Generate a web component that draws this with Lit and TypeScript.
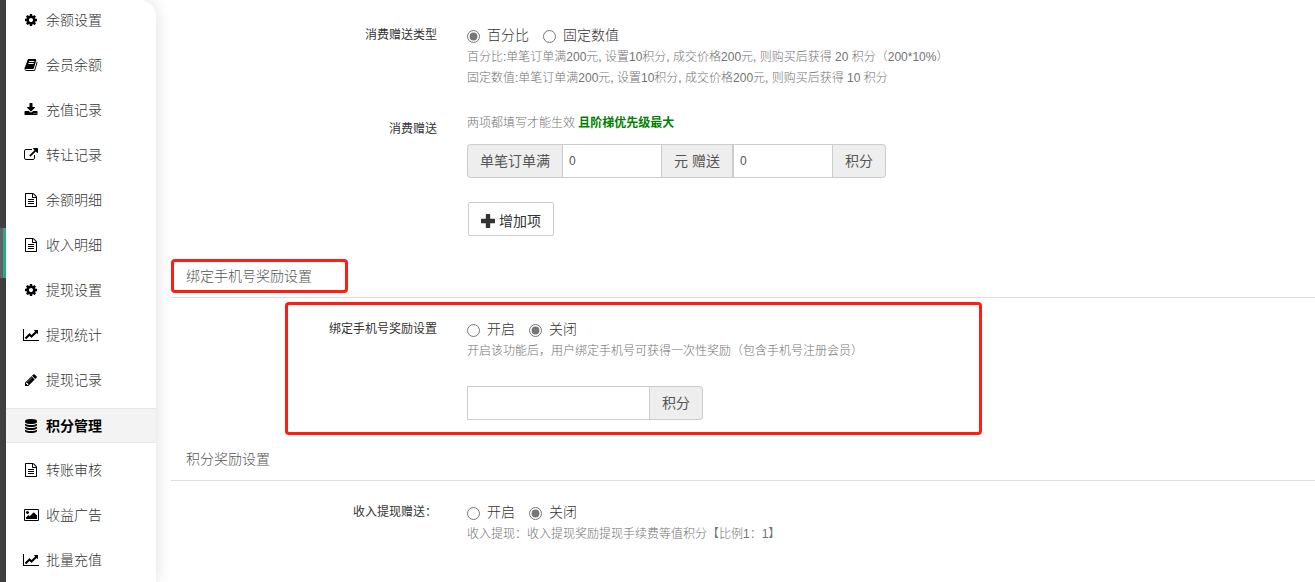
import { LitElement, html, css, svg } from "lit";
import { customElement, property, state } from "lit/decorators.js";
import { classMap } from "lit/directives/class-map.js";

type Icon = { box: string; width: number; path: string };

const doc: Icon = {
  box: "0 0 1792 1792",
  width: 14,
  path: "M1596 380q28 28 48 76t20 88v1152q0 40-28 68t-68 28h-1344q-40 0-68-28t-28-68v-1600q0-40 28-68t68-28h896q40 0 88 20t76 48zm-444-244v376h376q-10-29-22-41l-313-313q-12-12-41-22zm384 1528v-1024h-416q-40 0-68-28t-28-68v-416h-768v1536h1280zm-1024-864q0-14 9-23t23-9h704q14 0 23 9t9 23v64q0 14-9 23t-23 9h-704q-14 0-23-9t-9-23v-64zm736 224q14 0 23 9t9 23v64q0 14-9 23t-23 9h-704q-14 0-23-9t-9-23v-64q0-14 9-23t23-9h704zm0 256q14 0 23 9t9 23v64q0 14-9 23t-23 9h-704q-14 0-23-9t-9-23v-64q0-14 9-23t23-9h704z",
};
const cog: Icon = {
  box: "0 0 1792 1792",
  width: 14,
  path: "M1152 896q0-106-75-181t-181-75-181 75-75 181 75 181 181 75 181-75 75-181zm512-109v222q0 12-8 23t-20 13l-185 28q-19 54-39 91 35 50 107 138 10 12 10 25t-9 23q-27 37-99 108t-94 71q-12 0-26-9l-138-108q-44 23-91 38-16 136-29 186-7 28-36 28h-222q-14 0-24.5-8.5t-11.5-21.5l-28-184q-49-16-90-37l-141 107q-10 9-25 9-14 0-25-11-126-114-165-168-7-10-7-23 0-12 8-23 15-21 51-66.5t54-70.5q-27-50-41-99l-183-27q-13-2-21-12.5t-8-23.5v-222q0-12 8-23t19-13l186-28q14-46 39-92-40-57-107-138-10-12-10-24 0-10 9-23 26-36 98.5-107.5t94.5-71.5q13 0 26 10l138 107q44-23 91-38 16-136 29-186 7-28 36-28h222q14 0 24.5 8.5t11.5 21.5l28 184q49 16 90 37l142-107q9-9 24-9 13 0 25 10 129 119 165 170 7 8 7 22 0 12-8 23-15 21-51 66.5t-54 70.5q26 50 41 98l183 28q13 2 21 12.5t8 23.5z",
};
const chart: Icon = {
  box: "0 0 2048 1792",
  width: 16,
  path: "M2048 1536v128h-2048v-1536h128v1408h1920zm-128-1248v435q0 21-19.5 29.5t-35.5-7.5l-121-121-633 633q-10 10-23 10t-23-10l-233-233-416 416-192-192 585-585q10-10 23-10t23 10l233 233 464-464-121-121q-16-16-7.5-35.5t29.5-19.5h435q14 0 23 9t9 23z",
};
const book: Icon = {
  box: "0 0 1792 1792",
  width: 14,
  path: "M1703 478q40 57 18 129l-275 906q-19 64-76.5 107.5t-122.5 43.5h-923q-77 0-148.5-53.5t-99.5-131.5q-24-67-2-127 0-4 3-27t4-37q1-8-3-21.5t-3-19.5q2-11 8-21t16.5-23.5 16.5-23.5q23-38 45-91.5t30-91.5q3-10 .5-30t-.5-28q3-11 17-28t17-23q21-36 42-92t25-90q1-9-2.5-32t.5-28q4-13 22-30.5t22-22.5q19-26 42.5-84.5t27.5-96.5q1-8-3-25.5t-2-26.5q2-8 9-18t18-23 17-21q8-12 16.5-30.5t15-35 16-36 19.5-32 26.5-23.5 36-11.5 47.5 5.5l-1 3q38-9 51-9h761q74 0 114 56t18 130l-274 906q-36 119-71.5 153.5t-128.5 34.5h-869q-27 0-38 15-11 16-1 43 24 70 144 70h923q29 0 56-15.5t35-41.5l300-987q7-22 5-57 38 15 59 43zm-1064 2q-4 13 2 22.5t20 9.5h608q13 0 25.5-9.5t16.5-22.5l21-64q4-13-2-22.5t-20-9.5h-608q-13 0-25.5 9.5t-16.5 22.5zm-83 256q-4 13 2 22.5t20 9.5h608q13 0 25.5-9.5t16.5-22.5l21-64q4-13-2-22.5t-20-9.5h-608q-13 0-25.5 9.5t-16.5 22.5z",
};
const download: Icon = {
  box: "0 0 1792 1792",
  width: 14,
  path: "M1344 1344q0-26-19-45t-45-19-45 19-19 45 19 45 45 19 45-19 19-45zm256 0q0-26-19-45t-45-19-45 19-19 45 19 45 45 19 45-19 19-45zm128-224v320q0 40-28 68t-68 28h-1472q-40 0-68-28t-28-68v-320q0-40 28-68t68-28h465l135 136q58 56 136 56t136-56l136-136h464q40 0 68 28t28 68zm-325-569q17 41-14 70l-448 448q-18 19-45 19t-45-19l-448-448q-31-29-14-70 17-39 59-39h256v-448q0-26 19-45t45-19h256q26 0 45 19t19 45v448h256q42 0 59 39z",
};
const external: Icon = {
  box: "0 0 1792 1792",
  width: 14,
  path: "M1408 928v320q0 119-84.5 203.5t-203.5 84.5h-832q-119 0-203.5-84.5t-84.5-203.5v-832q0-119 84.5-203.5t203.5-84.5h704q14 0 23 9t9 23v64q0 14-9 23t-23 9h-704q-66 0-113 47t-47 113v832q0 66 47 113t113 47h832q66 0 113-47t47-113v-320q0-14 9-23t23-9h64q14 0 23 9t9 23zm384-864v512q0 26-19 45t-45 19-45-19l-176-176-652 652q-10 10-23 10t-23-10l-114-114q-10-10-10-23t10-23l652-652-176-176q-19-19-19-45t19-45 45-19h512q26 0 45 19t19 45z",
};
const pencil: Icon = {
  box: "0 0 1792 1792",
  width: 14,
  path: "M491 1536l91-91-235-235-91 91v107h128v128h107zm523-928q0-22-22-22-10 0-17 7l-542 542q-7 7-7 17 0 22 22 22 10 0 17-7l542-542q7-7 7-17zm-54-192l416 416-832 832h-416v-416zm683 96q0 53-37 90l-166 166-416-416 166-165q36-38 90-38 53 0 91 38l235 234q37 39 37 91z",
};
const database: Icon = {
  box: "0 0 1792 1792",
  width: 14,
  path: "M896 768q237 0 443-43t325-127v170q0 69-103 128t-280 93.5-385 34.5-385-34.5-280-93.5-103-128v-170q119 84 325 127t443 43zm0 768q237 0 443-43t325-127v170q0 69-103 128t-280 93.5-385 34.5-385-34.5-280-93.5-103-128v-170q119 84 325 127t443 43zm0-384q237 0 443-43t325-127v170q0 69-103 128t-280 93.5-385 34.5-385-34.5-280-93.5-103-128v-170q119 84 325 127t443 43zm0-1152q208 0 385 34.5t280 93.5 103 128v128q0 69-103 128t-280 93.5-385 34.5-385-34.5-280-93.5-103-128v-128q0-69 103-128t280-93.5 385-34.5z",
};
const picture: Icon = {
  box: "0 -128 1920 1792",
  width: 15,
  path: "M640 448q0 80-56 136t-136 56-136-56-56-136 56-136 136-56 136 56 56 136zm1024 384v448h-1408v-192l320-320 160 160 512-512zm96-704h-1600q-13 0-22.5 9.5t-9.5 22.5v1216q0 13 9.5 22.5t22.5 9.5h1600q13 0 22.5-9.5t9.5-22.5v-1216q0-13-9.5-22.5t-22.5-9.5zm160 32v1216q0 66-47 113t-113 47h-1600q-66 0-113-47t-47-113v-1216q0-66 47-113t113-47h1600q66 0 113 47t47 113z",
};
const plus: Icon = {
  box: "0 0 14 14",
  width: 14,
  path: "M5.5 0h3q.7 0 .7.7v4.1h4.1q.7 0 .7.7v3q0 .7-.7.7H9.200v4.100q0 .7-.7.7h-3q-.7 0-.7-.7V9.200H.7Q0 9.200 0 8.500v-3q0-.7.7-.7h4.100V.7q0-.7.7-.7z",
};

const drawIcon = (icon: Icon) => html`
  <svg width=${icon.width} height="14" viewBox=${icon.box} aria-hidden="true">
    ${svg`<path fill="currentColor" d=${icon.path}></path>`}
  </svg>
`;

const fontStack = css`"Liberation Sans", "Noto Sans CJK SC", sans-serif`;

@customElement("side-menu")
export class SideMenu extends LitElement {
  @state() private active = "积分管理";

  private items: [string, Icon][] = [
    ["余额设置", cog],
    ["会员余额", book],
    ["充值记录", download],
    ["转让记录", external],
    ["余额明细", doc],
    ["收入明细", doc],
    ["提现设置", cog],
    ["提现统计", chart],
    ["提现记录", pencil],
    ["积分管理", database],
    ["转账审核", doc],
    ["收益广告", picture],
    ["批量充值", chart],
  ];

  static styles = css`
    :host {
      display: block;
      background: #fff;
      border-top-right-radius: 16px;
      box-shadow: 0 0 16px rgba(0, 0, 0, 0.14);
      font-family: ${fontStack};
    }
    .list {
      display: flex;
      flex-direction: column;
      gap: 10px;
      margin: 0;
      padding: 3px 0;
      list-style: none;
    }
    .link {
      display: flex;
      align-items: center;
      gap: 7px;
      box-sizing: border-box;
      height: 35px;
      padding: 0 17px 2px;
      border: solid transparent;
      border-width: 1px 0;
      color: #333;
      font-size: 14px;
      font-weight: 300;
      line-height: 20px;
      text-decoration: none;
    }
    .link.active {
      padding-bottom: 0;
      border-color: #e7e7e7;
      background: #f3f3f3;
      color: #000;
      font-weight: 700;
    }
    .icon {
      display: flex;
      justify-content: center;
      width: 16px;
      color: #000;
    }
  `;

  render() {
    return html`
      <nav>
        <ul class="list">
          ${this.items.map(
            ([name, icon]) => html`
              <li>
                <a
                  href="#"
                  class=${classMap({ link: true, active: name === this.active })}
                  @click=${(e: Event) => {
                    e.preventDefault();
                    this.active = name;
                  }}
                >
                  <span class="icon">${drawIcon(icon)}</span>${name}
                </a>
              </li>
            `
          )}
        </ul>
      </nav>
    `;
  }
}

@customElement("radio-group")
export class RadioGroup extends LitElement {
  @property({ type: Array }) options: string[] = [];
  @property() value = "";
  @property() label = "";

  static styles = css`
    :host {
      display: block;
    }
    .group {
      display: flex;
      align-items: flex-start;
      gap: 14px;
      height: 22px;
      font: 300 14px/21px ${fontStack};
      color: #333;
    }
    .option {
      display: flex;
      align-items: center;
      gap: 7px;
    }
    .radio {
      width: 13px;
      height: 13px;
      margin: 2px 0 0;
      accent-color: #767676;
    }
  `;

  render() {
    return html`
      <div class="group" role="radiogroup" aria-label=${this.label}>
        ${this.options.map(
          (o) => html`
            <label class="option">
              <input
                class="radio"
                type="radio"
                name="choice"
                .checked=${o === this.value}
                @change=${() => (this.value = o)}
              />${o}
            </label>
          `
        )}
      </div>
    `;
  }
}

@customElement("app-root")
export class AppRoot extends LitElement {
  static styles = css`
    :host {
      display: grid;
      grid-template-columns: 6px 150px minmax(0, 1fr);
      min-height: 100vh;
      overflow: hidden;
      background: #fff;
      color: #333;
      font: 300 12px/20px ${fontStack};
    }
    .rail {
      padding-top: 228px;
      background: #424242;
    }
    .marker {
      height: 50px;
      border-right: 3px solid #2bb594;
      background: #666;
    }
    .main {
      padding: 25px 0 37px 15px;
    }
    .row {
      display: grid;
      grid-template-columns: 266px minmax(0, 1fr);
      column-gap: 30px;
    }
    .row + .row {
      margin-top: 24px;
    }
    .label {
      text-align: right;
      font-weight: 400;
    }
    .label.low {
      padding-top: 6px;
    }
    .help {
      margin: 0;
      color: #737373;
      line-height: 21px;
    }
    .strong {
      color: #008000;
      font-weight: 700;
    }
    .inputs {
      display: flex;
      height: 34px;
      margin-top: 10px;
      font-size: 14px;
    }
    .inputs.apart {
      margin-top: 24px;
    }
    .addon {
      display: flex;
      align-items: center;
      box-sizing: border-box;
      padding: 0 12px;
      border: 1px solid #ccc;
      border-left: 0;
      background: #eee;
      color: #555;
      font-weight: 400;
    }
    .addon.first {
      border-left: 1px solid #ccc;
      border-right: 0;
      border-radius: 4px 0 0 4px;
    }
    .addon.last {
      border-radius: 0 4px 4px 0;
    }
    .box {
      box-sizing: border-box;
      width: 100px;
      padding: 0 6px;
      border: 1px solid #ccc;
      border-radius: 0;
      background: #fff;
      color: #555;
      font: 400 12px/18px ${fontStack};
    }
    .box.wide {
      width: 183px;
    }
    .add {
      display: flex;
      align-items: center;
      gap: 4px;
      height: 34px;
      margin: 24px 0 0 1px;
      padding: 4px 12px 0;
      border: 1px solid #ccc;
      border-radius: 2px;
      background: #fff;
      color: #333;
      font: 400 14px/20px ${fontStack};
    }
    .heading {
      margin: 0;
      padding: 10px 15px;
      border-bottom: 1px solid #ddd;
      color: #555;
      font-size: 14px;
      font-weight: 300;
      line-height: 21px;
    }
    .bind {
      margin-top: 20px;
    }
    .points {
      margin-top: 19px;
    }
    .body {
      padding-top: 21px;
    }
    .framed {
      position: relative;
    }
    .framed::after {
      content: "";
      position: absolute;
      box-sizing: border-box;
      border: 3px solid #ff1d12;
      border-radius: 4px;
      pointer-events: none;
    }
    .heading.framed::after {
      left: 0;
      top: 3px;
      width: 177px;
      height: 34px;
    }
    .body.framed::after {
      left: 114px;
      top: 4px;
      width: 697px;
      bottom: -15px;
    }
  `;

  render() {
    return html`
      <div class="rail"><div class="marker"></div></div>
      <side-menu></side-menu>
      <main class="main">
        <div class="row">
          <div class="label">消费赠送类型</div>
          <div>
            <radio-group label="消费赠送类型" .options=${["百分比", "固定数值"]} value="百分比"></radio-group>
            <p class="help">百分比:单笔订单满200元, 设置10积分, 成交价格200元, 则购买后获得 20 积分（200*10%）</p>
            <p class="help">固定数值:单笔订单满200元, 设置10积分, 成交价格200元, 则购买后获得 10 积分</p>
          </div>
        </div>
        <div class="row">
          <div class="label low">消费赠送</div>
          <div>
            <p class="help">两项都填写才能生效 <b class="strong">且阶梯优先级最大</b></p>
            <div class="inputs">
              <label class="addon first" for="full">单笔订单满</label>
              <input class="box" id="full" type="text" value="0" />
              <label class="addon" for="give">元 赠送</label>
              <input class="box" id="give" type="text" value="0" />
              <span class="addon last">积分</span>
            </div>
            <button class="add" type="button">${drawIcon(plus)}<span>增加项</span></button>
          </div>
        </div>

        <section class="bind">
          <h2 class="heading framed">绑定手机号奖励设置</h2>
          <div class="body framed">
            <div class="row">
              <div class="label">绑定手机号奖励设置</div>
              <div>
                <radio-group label="绑定手机号奖励设置" .options=${["开启", "关闭"]} value="关闭"></radio-group>
                <p class="help">开启该功能后，用户绑定手机号可获得一次性奖励（包含手机号注册会员）</p>
                <div class="inputs apart">
                  <input class="box wide" id="reward" type="text" />
                  <label class="addon last" for="reward">积分</label>
                </div>
              </div>
            </div>
          </div>
        </section>

        <section class="points">
          <h2 class="heading">积分奖励设置</h2>
          <div class="body">
            <div class="row">
              <div class="label">收入提现赠送：</div>
              <div>
                <radio-group label="收入提现赠送" .options=${["开启", "关闭"]} value="关闭"></radio-group>
                <p class="help">收入提现：收入提现奖励提现手续费等值积分【比例1：1】</p>
              </div>
            </div>
          </div>
        </section>
      </main>
    `;
  }
}
